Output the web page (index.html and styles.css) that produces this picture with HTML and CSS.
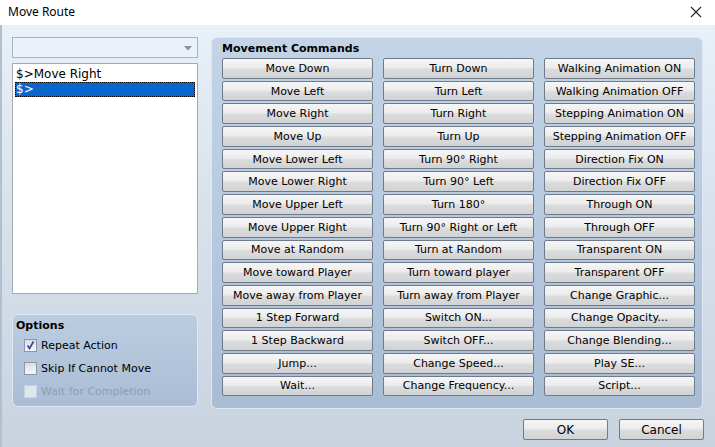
FILE: index.html
```html
<!DOCTYPE html>
<html>
<head>
<meta charset="utf-8">
<link rel="stylesheet" href="styles.css">
</head>
<body>
<div class="window">
  <div class="titlebar">
    <span class="title">Move Route</span>
    <svg class="close" width="12" height="12" viewBox="0 0 12 12"><path d="M1 1 L11 11 M11 1 L1 11" stroke="#222" stroke-width="1.1" fill="none"/></svg>
  </div>
  <div class="content">
    <div class="main">
      <div class="left">
        <div class="combo"><svg class="arrow" width="8" height="5" viewBox="0 0 8 5"><path d="M0 0 L8 0 L4 4.5 Z" fill="#8a9098"/></svg></div>
        <div class="list">
          <div class="item">$&gt;Move Right</div>
          <div class="item selected">$&gt;</div>
        </div>
        <div class="options">
          <div class="group-title">Options</div>
          <label class="check"><span class="box checked"><svg width="11" height="11" viewBox="0 0 11 11"><path d="M2.5 5.5 L4.5 8.5 L8.5 1.5" stroke="#3a3f9a" stroke-width="1.6" fill="none"/></svg></span>Repeat Action</label>
          <label class="check"><span class="box"></span>Skip If Cannot Move</label>
          <label class="check disabled"><span class="box"></span>Wait for Completion</label>
        </div>
      </div>
      <div class="panel">
        <div class="group-title">Movement Commands</div>
        <div class="grid">
          <div class="btn">Move Down</div><div class="btn">Turn Down</div><div class="btn">Walking Animation ON</div>
          <div class="btn">Move Left</div><div class="btn">Turn Left</div><div class="btn">Walking Animation OFF</div>
          <div class="btn">Move Right</div><div class="btn">Turn Right</div><div class="btn">Stepping Animation ON</div>
          <div class="btn">Move Up</div><div class="btn">Turn Up</div><div class="btn">Stepping Animation OFF</div>
          <div class="btn">Move Lower Left</div><div class="btn">Turn 90° Right</div><div class="btn">Direction Fix ON</div>
          <div class="btn">Move Lower Right</div><div class="btn">Turn 90° Left</div><div class="btn">Direction Fix OFF</div>
          <div class="btn">Move Upper Left</div><div class="btn">Turn 180°</div><div class="btn">Through ON</div>
          <div class="btn">Move Upper Right</div><div class="btn">Turn 90° Right or Left</div><div class="btn">Through OFF</div>
          <div class="btn">Move at Random</div><div class="btn">Turn at Random</div><div class="btn">Transparent ON</div>
          <div class="btn">Move toward Player</div><div class="btn">Turn toward player</div><div class="btn">Transparent OFF</div>
          <div class="btn">Move away from Player</div><div class="btn">Turn away from Player</div><div class="btn">Change Graphic...</div>
          <div class="btn">1 Step Forward</div><div class="btn">Switch ON...</div><div class="btn">Change Opacity...</div>
          <div class="btn">1 Step Backward</div><div class="btn">Switch OFF...</div><div class="btn">Change Blending...</div>
          <div class="btn">Jump...</div><div class="btn">Change Speed...</div><div class="btn">Play SE...</div>
          <div class="btn">Wait...</div><div class="btn">Change Frequency...</div><div class="btn">Script...</div>
        </div>
      </div>
    </div>
    <div class="footer">
      <div class="btn dlg">OK</div>
      <div class="btn dlg">Cancel</div>
    </div>
  </div>
</div>
</body>
</html>
```
FILE: styles.css
```css
html, body {
  margin: 0;
  padding: 0;
  width: 715px;
  height: 447px;
  overflow: hidden;
  background: #ffffff;
}
.window {
  width: 715px;
  height: 447px;
  display: flex;
  flex-direction: column;
  font-family: "DejaVu Sans", Verdana, sans-serif;
  font-size: 11px;
  color: #000;
}
.titlebar {
  height: 25px;
  background: #ffffff;
  display: flex;
  align-items: center;
  justify-content: space-between;
  padding: 0 13px 0 8px;
  flex: none;
}
.title {
  font-family: "Noto Sans", "Open Sans", sans-serif;
  font-size: 12px;
  color: #000;
  position: relative;
  top: -1px;
}
.close {
  display: block;
  position: relative;
  top: -1px;
}
.content {
  flex: 1;
  background: linear-gradient(to bottom, #e8f0f9 0%, #d9e3ee 40%, #c8d3df 100%);
  border-left: 2px solid #b3bfcc;
  padding: 12px 11px 0 10px;
  display: flex;
  flex-direction: column;
}
.main {
  display: flex;
  gap: 13px;
}
.left {
  width: 186px;
  display: flex;
  flex-direction: column;
}
.combo {
  height: 19px;
  border: 1px solid #aab3bd;
  background: #eaf1f9;
  position: relative;
}
.arrow {
  position: absolute;
  right: 5px;
  top: 8px;
}
.list {
  margin-top: 5px;
  height: 231px;
  box-sizing: border-box;
  border: 1px solid #a3abb6;
  background: #ffffff;
  padding: 3px 2px 0 2px;
}
.item {
  height: 15px;
  line-height: 15px;
  padding-left: 1px;
  font-size: 12px;
}
.item.selected {
  background: #0a66cc;
  color: #fff;
  outline: 1px dotted #000;
  outline-offset: -1px;
}
.options {
  margin-top: 20px;
  height: 93px;
  border: 1px solid #dfe8f2;
  border-radius: 6px;
  background: linear-gradient(to bottom, #bccde1 0%, #a9bdd5 100%);
  padding: 3px 0 0 3px;
  box-sizing: border-box;
}
.group-title {
  font-weight: bold;
  font-size: 11px;
  height: 15px;
  line-height: 15px;
}
.options .group-title {
  height: 16px;
}
.check {
  display: flex;
  align-items: center;
  height: 23px;
  padding-left: 8px;
  gap: 4px;
  font-size: 11px;
}
.box {
  width: 11px;
  height: 11px;
  border: 1px solid #8c96a4;
  background: linear-gradient(to bottom, #d9dee5, #f6f7f9);
  display: block;
  flex: none;
}
.box svg { display: block; }
.check.disabled { color: #8e9cb4; }
.check.disabled .box {
  border-color: #c9d3df;
  background: #dfe6ee;
}
.panel {
  width: 492px;
  height: 372px;
  box-sizing: border-box;
  border: 1px solid #dfe8f2;
  border-radius: 6px;
  background: linear-gradient(to bottom, #c4d4e6 0%, #b4c7de 60%, #a8bcd4 100%);
  padding: 2px 8px 0 10px;
}
.panel .group-title {
  height: 18px;
  line-height: 17px;
}
.grid {
  display: grid;
  grid-template-columns: 151px 151px 151px;
  column-gap: 10px;
  grid-auto-rows: 20.7px;
  row-gap: 2px;
}
.btn {
  box-sizing: border-box;
  border: 1px solid #6f7b88;
  border-radius: 2px;
  background: linear-gradient(to bottom, #f6f6f6 0%, #ececec 45%, #dcdcdc 55%, #d0d2d4 100%);
  display: flex;
  align-items: center;
  justify-content: center;
  white-space: nowrap;
  font-size: 11px;
  color: #000;
}
.footer {
  display: flex;
  justify-content: flex-end;
  gap: 11px;
  margin-top: 10px;
}
.btn.dlg {
  width: 85px;
  height: 21px;
  font-size: 12px;
}
```
